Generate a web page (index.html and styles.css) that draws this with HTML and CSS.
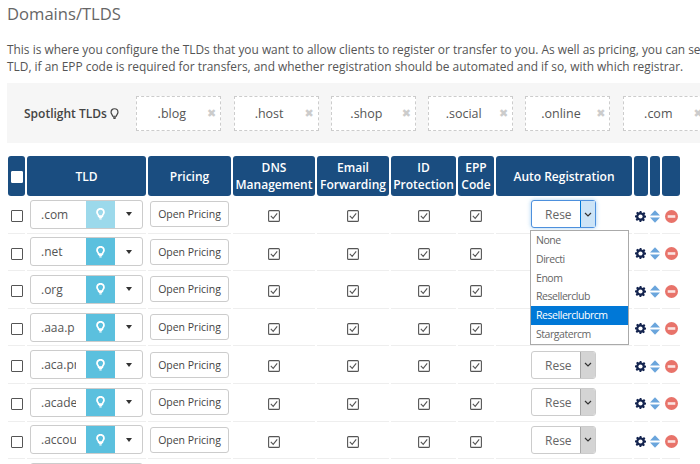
FILE: index.html
```html
<!DOCTYPE html>
<html lang="en">
<head>
<meta charset="utf-8">
<title>Domains/TLDS</title>
<link rel="stylesheet" href="styles.css">
</head>
<body>
<svg class="defs" width="0" height="0" aria-hidden="true">
  <symbol id="bulb" viewBox="0 0 12 16"><path d="M6 1a4.6 4.6 0 0 0-4.6 4.6c0 2.3 1.9 3.2 2.2 5.4h4.8c.3-2.2 2.2-3.1 2.2-5.4A4.6 4.6 0 0 0 6 1z" fill="none" stroke="currentColor" stroke-width="1.6"/><path d="M4 12.3h4M4.5 14h3" stroke="currentColor" stroke-width="1.4" fill="none"/></symbol>
  <symbol id="bulb-bold" viewBox="0 0 12 16"><path d="M6 1a4.6 4.6 0 0 0-4.6 4.6c0 2.3 1.9 3.2 2.2 5.4h4.8c.3-2.2 2.2-3.1 2.2-5.4A4.6 4.6 0 0 0 6 1z" fill="none" stroke="currentColor" stroke-width="2.4"/><path d="M4 12.600h4M4.500 14.500h3" stroke="currentColor" stroke-width="1.600" fill="none"/></symbol>
  <symbol id="check" viewBox="0 0 12 12"><rect x=".6" y=".6" width="10.8" height="10.8" rx="1" fill="none" stroke="#555" stroke-width="1.1"/><path d="M2.8 5.8l2.4 2.5 4-5" fill="none" stroke="#555" stroke-width="1.1"/></symbol>
  <symbol id="gear" viewBox="0 0 12 12"><path d="M5 0h2l.3 1.6 1.2.5L9.900 1.200l1.400 1.400-.9 1.400.5 1.200L12 5v2l-1.600.3-.5 1.200.9 1.400-1.400 1.400-1.400-.9-1.200.5L7 12H5l-.3-1.600-1.200-.5-1.400.9L.7 9.400l.9-1.400-.5-1.200L0 7V5l1.600-.3.5-1.200-.9-1.400L2.600.7l1.400.9 1.200-.5z" fill="#14244f"/><circle cx="6" cy="6" r="2.300" fill="#fff"/></symbol>
  <symbol id="sort" viewBox="0 0 11 14"><path d="M5.500 0L11 6H0z" fill="#6aa5dc"/><path d="M5.500 14L11 8H0z" fill="#6aa5dc"/></symbol>
  <symbol id="remove" viewBox="0 0 12 12"><circle cx="6" cy="6" r="6" fill="#e8736a"/><rect x="2.500" y="4.800" width="7" height="2.400" fill="#fbe4e1"/></symbol>
</svg>
<main class="page">
  <h1 class="title">Domains/TLDS</h1>
  <p class="intro">This is where you configure the TLDs that you want to allow clients to register or transfer to you. As well as pricing, you can set<br>TLD, if an EPP code is required for transfers, and whether registration should be automated and if so, with which registrar.</p>
  <section class="spotlight">
    <strong class="spot-label">Spotlight TLDs <svg class="spot-bulb"><use href="#bulb"/></svg></strong>
    <div class="tile">.blog<span class="x">✖</span></div>
    <div class="tile">.host<span class="x">✖</span></div>
    <div class="tile">.shop<span class="x">✖</span></div>
    <div class="tile">.social<span class="x">✖</span></div>
    <div class="tile">.online<span class="x">✖</span></div>
    <div class="tile">.com<span class="x">✖</span></div>
  </section>
  <div class="table-wrap">
  <table class="tlds">
    <colgroup><col class="c1"><col class="c2"><col class="c3"><col class="c4"><col class="c5"><col class="c6"><col class="c7"><col class="c8"><col class="c9"><col class="c10"><col class="c11"></colgroup>
    <thead><tr>
      <th><span class="box head-box"></span></th><th>TLD</th><th>Pricing</th><th>DNS<br>Management</th><th>Email<br>Forwarding</th><th>ID<br>Protection</th><th>EPP<br>Code</th><th>Auto Registration</th><th></th><th></th><th></th>
    </tr></thead>
    <tbody>
      <tr>
        <td><span class="box"></span></td>
        <td><div class="group"><span class="name">.com</span><span class="bulb on"><svg><use href="#bulb-bold"/></svg></span><span class="caret"><i></i></span></div></td>
        <td><span class="btn">Open Pricing</span></td>
        <td><svg class="chk"><use href="#check"/></svg></td><td><svg class="chk"><use href="#check"/></svg></td><td><svg class="chk"><use href="#check"/></svg></td><td><svg class="chk"><use href="#check"/></svg></td>
        <td><div class="sel open"><span class="val">Rese</span><span class="arrow"><svg viewBox="0 0 8 5"><path d="M1 1l3 3 3-3" fill="none" stroke="#333" stroke-width="1.200"/></svg></span></div></td>
        <td><svg class="gear"><use href="#gear"/></svg></td><td><svg class="sort"><use href="#sort"/></svg></td><td><svg class="rem"><use href="#remove"/></svg></td>
      </tr>
      <tr>
        <td><span class="box"></span></td>
        <td><div class="group"><span class="name">.net</span><span class="bulb"><svg><use href="#bulb-bold"/></svg></span><span class="caret"><i></i></span></div></td>
        <td><span class="btn">Open Pricing</span></td>
        <td><svg class="chk"><use href="#check"/></svg></td><td><svg class="chk"><use href="#check"/></svg></td><td><svg class="chk"><use href="#check"/></svg></td><td><svg class="chk"><use href="#check"/></svg></td>
        <td></td>
        <td><svg class="gear"><use href="#gear"/></svg></td><td><svg class="sort"><use href="#sort"/></svg></td><td><svg class="rem"><use href="#remove"/></svg></td>
      </tr>
      <tr>
        <td><span class="box"></span></td>
        <td><div class="group"><span class="name">.org</span><span class="bulb"><svg><use href="#bulb-bold"/></svg></span><span class="caret"><i></i></span></div></td>
        <td><span class="btn">Open Pricing</span></td>
        <td><svg class="chk"><use href="#check"/></svg></td><td><svg class="chk"><use href="#check"/></svg></td><td><svg class="chk"><use href="#check"/></svg></td><td><svg class="chk"><use href="#check"/></svg></td>
        <td></td>
        <td><svg class="gear"><use href="#gear"/></svg></td><td><svg class="sort"><use href="#sort"/></svg></td><td><svg class="rem"><use href="#remove"/></svg></td>
      </tr>
      <tr>
        <td><span class="box"></span></td>
        <td><div class="group"><span class="name">.aaa.p</span><span class="bulb"><svg><use href="#bulb-bold"/></svg></span><span class="caret"><i></i></span></div></td>
        <td><span class="btn">Open Pricing</span></td>
        <td><svg class="chk"><use href="#check"/></svg></td><td><svg class="chk"><use href="#check"/></svg></td><td><svg class="chk"><use href="#check"/></svg></td><td><svg class="chk"><use href="#check"/></svg></td>
        <td></td>
        <td><svg class="gear"><use href="#gear"/></svg></td><td><svg class="sort"><use href="#sort"/></svg></td><td><svg class="rem"><use href="#remove"/></svg></td>
      </tr>
      <tr>
        <td><span class="box"></span></td>
        <td><div class="group"><span class="name">.aca.pr</span><span class="bulb"><svg><use href="#bulb-bold"/></svg></span><span class="caret"><i></i></span></div></td>
        <td><span class="btn">Open Pricing</span></td>
        <td><svg class="chk"><use href="#check"/></svg></td><td><svg class="chk"><use href="#check"/></svg></td><td><svg class="chk"><use href="#check"/></svg></td><td><svg class="chk"><use href="#check"/></svg></td>
        <td><div class="sel"><span class="val">Rese</span><span class="arrow"><svg viewBox="0 0 8 5"><path d="M1 1l3 3 3-3" fill="none" stroke="#333" stroke-width="1.200"/></svg></span></div></td>
        <td><svg class="gear"><use href="#gear"/></svg></td><td><svg class="sort"><use href="#sort"/></svg></td><td><svg class="rem"><use href="#remove"/></svg></td>
      </tr>
      <tr>
        <td><span class="box"></span></td>
        <td><div class="group"><span class="name">.acade</span><span class="bulb"><svg><use href="#bulb-bold"/></svg></span><span class="caret"><i></i></span></div></td>
        <td><span class="btn">Open Pricing</span></td>
        <td><svg class="chk"><use href="#check"/></svg></td><td><svg class="chk"><use href="#check"/></svg></td><td><svg class="chk"><use href="#check"/></svg></td><td><svg class="chk"><use href="#check"/></svg></td>
        <td><div class="sel"><span class="val">Rese</span><span class="arrow"><svg viewBox="0 0 8 5"><path d="M1 1l3 3 3-3" fill="none" stroke="#333" stroke-width="1.200"/></svg></span></div></td>
        <td><svg class="gear"><use href="#gear"/></svg></td><td><svg class="sort"><use href="#sort"/></svg></td><td><svg class="rem"><use href="#remove"/></svg></td>
      </tr>
      <tr>
        <td><span class="box"></span></td>
        <td><div class="group"><span class="name">.accou</span><span class="bulb"><svg><use href="#bulb-bold"/></svg></span><span class="caret"><i></i></span></div></td>
        <td><span class="btn">Open Pricing</span></td>
        <td><svg class="chk"><use href="#check"/></svg></td><td><svg class="chk"><use href="#check"/></svg></td><td><svg class="chk"><use href="#check"/></svg></td><td><svg class="chk"><use href="#check"/></svg></td>
        <td><div class="sel"><span class="val">Rese</span><span class="arrow"><svg viewBox="0 0 8 5"><path d="M1 1l3 3 3-3" fill="none" stroke="#333" stroke-width="1.200"/></svg></span></div></td>
        <td><svg class="gear"><use href="#gear"/></svg></td><td><svg class="sort"><use href="#sort"/></svg></td><td><svg class="rem"><use href="#remove"/></svg></td>
      </tr>
      <tr>
        <td></td><td><div class="group"><span class="name"></span><span class="bulb"></span><span class="caret"></span></div></td><td></td><td></td><td></td><td></td><td></td><td></td><td></td><td></td><td></td>
      </tr>
    </tbody>
  </table>
  <ul class="dropdown">
    <li>None</li><li>Directi</li><li>Enom</li><li>Resellerclub</li><li class="active">Resellerclubrcm</li><li>Stargatercm</li>
  </ul>
  </div>
</main>
</body>
</html>
```
FILE: styles.css
```css
html, body {
  margin: 0;
  height: 464px;
  overflow: hidden;
  background: #fff;
}
.defs { position: absolute; }
.page {
  width: 700px;
  height: 464px;
  overflow: hidden;
  font-family: "Open Sans", "Liberation Sans", sans-serif;
  color: #555;
}
.title {
  margin: 0;
  padding: 2px 0 0 7px;
  font-size: 16.600px;
  line-height: 24px;
  font-weight: 400;
  color: #666;
}
.intro {
  margin: 15px 0 0 7px;
  width: 800px;
  font-size: 11.920px;
  line-height: 17px;
  white-space: nowrap;
  color: #555;
}
.spotlight {
  display: flex;
  align-items: center;
  gap: 12.300px;
  margin: 8px 0 0 7px;
  padding-left: 17px;
  height: 60px;
  width: 720px;
  background: #f6f6f6;
}
.spot-label {
  width: 100px;
  flex: none;
  font-size: 12px;
  font-weight: 600;
  color: #444;
  white-space: nowrap;
}
.spot-bulb {
  width: 9px;
  height: 12px;
  vertical-align: -2px;
  color: #444;
}
.tile {
  position: relative;
  flex: none;
  box-sizing: border-box;
  width: 85px;
  height: 35px;
  padding-right: 14px;
  background: #fff;
  border: 1px dashed #ccc;
  text-align: center;
  font-size: 12.500px;
  line-height: 33px;
  color: #555;
}
.x {
  position: absolute;
  right: 4px;
  top: 0;
  font-size: 11px;
  color: #ccc;
  font-family: "DejaVu Sans", sans-serif;
}
.table-wrap {
  position: relative;
  margin: 13px 0 0 6px;
}
.tlds {
  table-layout: fixed;
  border-collapse: separate;
  border-spacing: 2px 0;
  width: 675px;
}
.c1 { width: 17px; }
.c2 { width: 119px; }
.c3 { width: 83px; }
.c4 { width: 82px; }
.c5 { width: 72px; }
.c6 { width: 65px; }
.c7 { width: 36px; }
.c8 { width: 136px; }
.c9 { width: 14px; }
.c10 { width: 10px; }
.c11 { width: 18px; }
.tlds th {
  height: 40px;
  padding: 0;
  background: #1a4d80;
  border-radius: 3px;
  color: #fff;
  font-size: 12px;
  line-height: 17px;
  font-weight: 600;
  text-align: center;
  vertical-align: middle;
  white-space: nowrap;
}
.tlds td {
  height: 37.600px;
  box-sizing: border-box;
  padding: 0;
  border-bottom: 1px solid #eee;
  text-align: center;
  vertical-align: middle;
  overflow: visible;
}
.box {
  display: inline-block;
  box-sizing: border-box;
  width: 12px;
  height: 12px;
  border: 1px solid #555;
  border-radius: 1px;
  background: #fff;
  vertical-align: middle;
}
.head-box { border-color: #fff; }
.group {
  display: flex;
  box-sizing: border-box;
  width: 113px;
  height: 29px;
  margin-left: 3px;
  border: 1px solid #ccc;
  border-radius: 3px;
  background: #fff;
  overflow: hidden;
  text-align: left;
}
.name {
  box-sizing: border-box;
  width: 55px;
  padding: 0 0 0 10px;
  border-right: 10px solid transparent;
  font-size: 12px;
  line-height: 27px;
  color: #555;
  overflow: hidden;
  white-space: nowrap;
}
.bulb {
  display: flex;
  align-items: center;
  justify-content: center;
  width: 29px;
  background: #5bc0de;
  color: #fff;
}
.bulb.on { background: #9cd9eb; }
.bulb svg { width: 9px; height: 12px; }
.caret {
  flex: 1;
  display: flex;
  align-items: center;
  justify-content: center;
}
.caret i {
  width: 0;
  height: 0;
  border-left: 3.500px solid transparent;
  border-right: 3.500px solid transparent;
  border-top: 4px solid #333;
}
.btn {
  display: inline-block;
  box-sizing: border-box;
  width: 79px;
  height: 26px;
  border: 1px solid #ccc;
  border-radius: 3px;
  font-size: 10.500px;
  line-height: 24px;
  color: #444;
  background: #fff;
  white-space: nowrap;
  vertical-align: middle;
}
.chk {
  width: 12px;
  height: 12px;
  vertical-align: middle;
}
.sel {
  display: flex;
  box-sizing: border-box;
  width: 65px;
  height: 28px;
  margin-left: 35px;
  border: 1px solid #ccc;
  border-radius: 3px;
  background: #fff;
  overflow: hidden;
}
.sel.open {
  border: 1px solid #4d90dd;
  box-shadow: 0 0 4px rgba(102, 175, 233, .6);
  overflow: visible;
}
.val {
  flex: 1;
  padding-left: 13px;
  text-align: left;
  font-size: 12px;
  line-height: 27px;
  color: #666;
}
.arrow {
  display: flex;
  align-items: center;
  justify-content: center;
  width: 14px;
  background: #d4d4d4;
  border-left: 1px solid #aaa;
}
.arrow svg { width: 8px; height: 5px; }
.open .arrow {
  background: #cce4f7;
  border-left: 1px solid #0078d7;
}
.gear { width: 11px; height: 11px; vertical-align: middle; margin-right: 1px; }
.sort { width: 10px; height: 13px; vertical-align: middle; }
.rem { width: 13px; height: 13px; vertical-align: middle; }
.dropdown {
  position: absolute;
  left: 524px;
  top: 74px;
  box-sizing: border-box;
  width: 99px;
  margin: 0;
  padding: 0;
  list-style: none;
  background: #fff;
  border: 1px solid #aaa;
  font-size: 10.500px;
  line-height: 18.800px;
  letter-spacing: -.45px;
  color: #666;
}
.dropdown li { padding-left: 5px; }
.dropdown .active {
  background: #0078d7;
  color: #fff;
}
```
